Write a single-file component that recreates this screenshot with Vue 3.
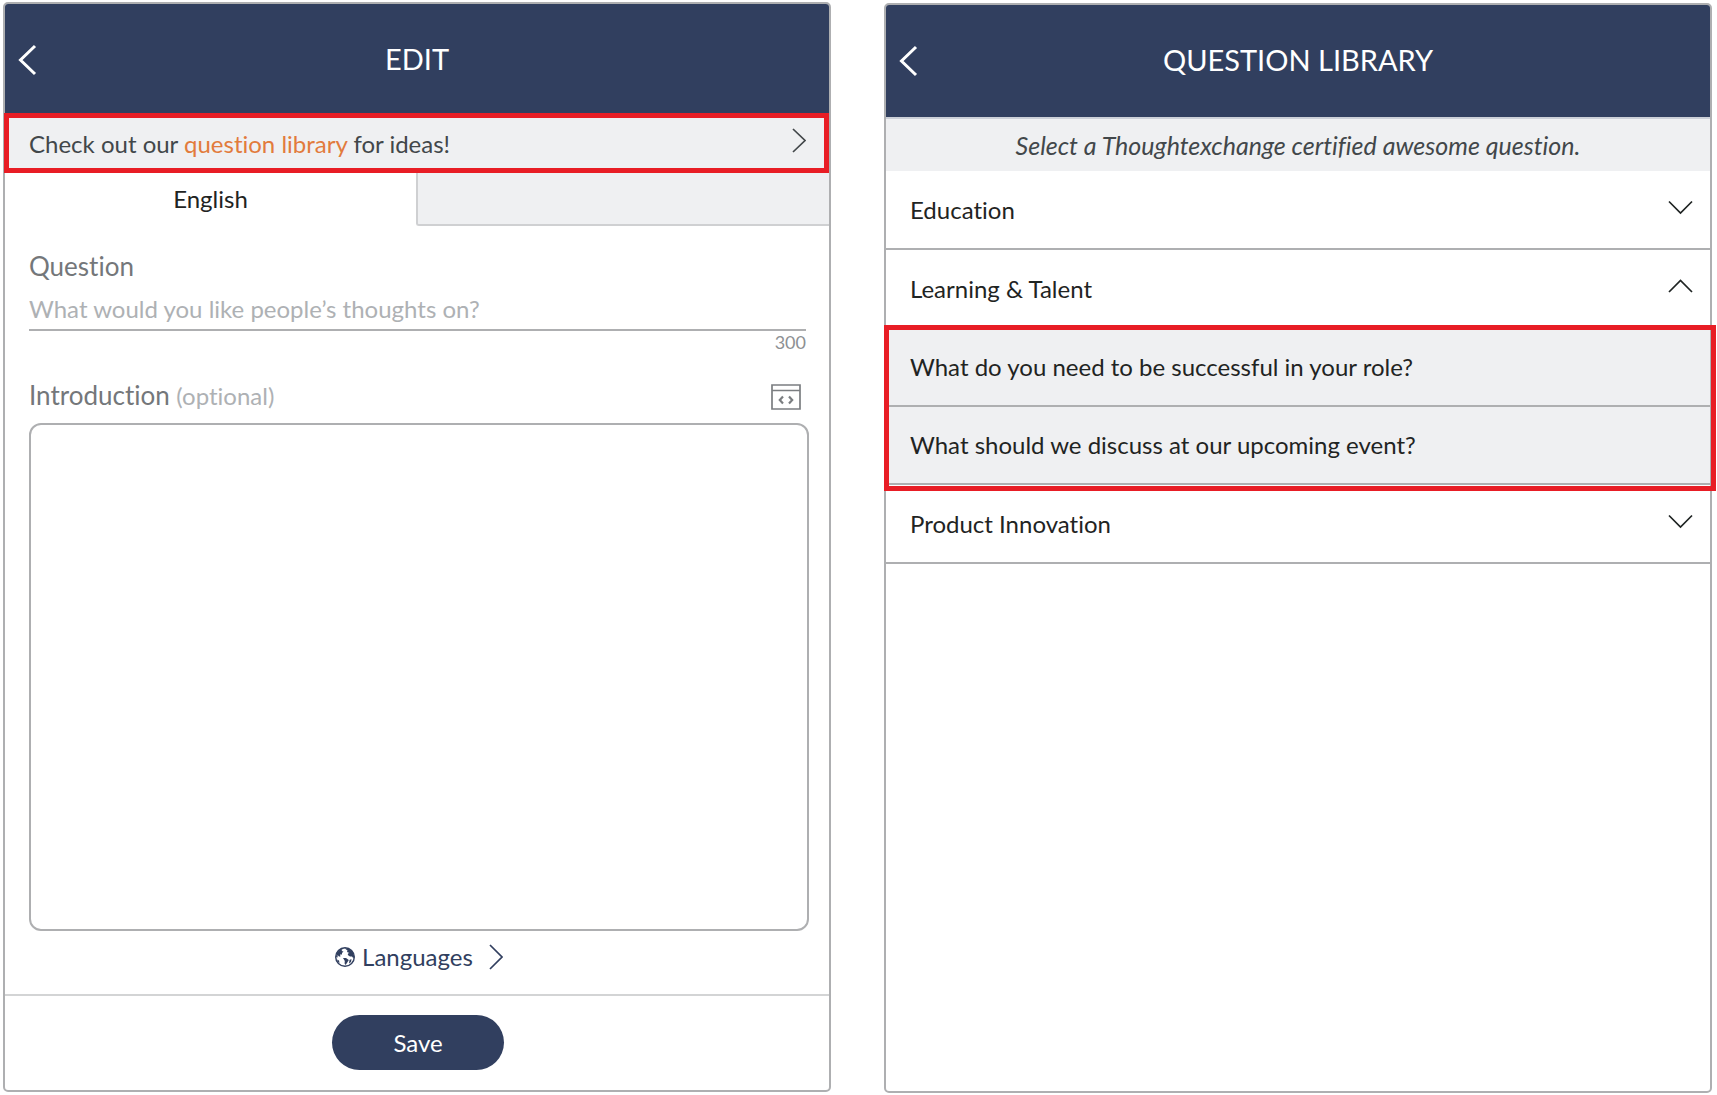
<script setup>
import { ref } from 'vue'

const question = ref('')
const introduction = ref('')
const openCategory = ref('Learning & Talent')

const categories = [
  { name: 'Education', questions: [] },
  {
    name: 'Learning & Talent',
    questions: [
      'What do you need to be successful in your role?',
      'What should we discuss at our upcoming event?',
    ],
  },
  { name: 'Product Innovation', questions: [] },
]

function toggle(name) {
  openCategory.value = openCategory.value === name ? '' : name
}
</script>

<template>
  <main class="screens">
    <section class="panel">
      <header class="bar">
        <button class="back" type="button" aria-label="Back">
          <svg width="20" height="32" viewBox="0 0 20 32" aria-hidden="true">
            <path d="M17 2 2.500 16 17 30" />
          </svg>
        </button>
        <h1>EDIT</h1>
      </header>

      <div class="strip tip highlight">
        <p>Check out our <a href="#library">question library</a> for ideas!</p>
        <svg class="chevron" width="14" height="32" viewBox="0 0 14 32" aria-hidden="true">
          <path d="M1 1 13 12.500 1 24" />
        </svg>
      </div>

      <div class="tabs">
        <button class="tab active" type="button">English</button>
        <div class="tab"></div>
      </div>

      <form class="form" @submit.prevent>
        <label class="label" for="question">Question</label>
        <input
          id="question"
          v-model="question"
          class="question"
          type="text"
          maxlength="300"
          placeholder="What would you like people’s thoughts on?"
        />
        <span class="count">{{ 300 - question.length }}</span>

        <div class="intro-head">
          <label class="label" for="introduction">Introduction <small>(optional)</small></label>
          <button class="code" type="button" aria-label="Embed code">
            <svg width="30" height="26" viewBox="0 0 30 26" aria-hidden="true">
              <path d="M1 1H29V25H1ZM1 6.500H29" stroke-width="1.700" />
              <path d="M12 12.500 8.800 16 12 19.500M18 12.500 21.200 16 18 19.500" stroke-width="2.200" />
            </svg>
          </button>
        </div>
        <textarea id="introduction" v-model="introduction" class="intro"></textarea>

        <button class="languages" type="button">
          <svg class="globe" width="20" height="20" viewBox="0 0 20 20" aria-hidden="true">
            <circle cx="10" cy="10" r="9.300" />
            <path d="M2 5.500 5.500 2 7.500 2.500 6.500 4 8.500 4.500 7 6 7 7.500 5 7.500 5.500 9.500 4 9.500 2.600 8 2.600 10.500 1 10Z" />
            <path d="M9.500 1.200 14 2 17.500 4.500 19.200 9 18.500 11.500 17 9.500 15 9.500 12.800 8 13 6.500 14.500 6 12 5 12.500 3.500Z" />
            <path d="M8 11 11 11 13.800 13 12.600 15 10.600 18 9.600 16.500 9.800 14Z" />
            <path d="M14.500 13 16.500 12 16 15 14 16.500Z" />
            <path d="M2 12.500 4 13.500 4.500 16 3 15Z" />
          </svg>
          <span>Languages</span>
          <svg class="chevron" width="14" height="28" viewBox="0 0 14 28" aria-hidden="true">
            <path d="M1 2 13 14 1 26" />
          </svg>
        </button>
      </form>

      <footer class="actions">
        <button class="save" type="button">Save</button>
      </footer>
    </section>

    <section id="library" class="panel library">
      <header class="bar">
        <button class="back" type="button" aria-label="Back">
          <svg width="20" height="32" viewBox="0 0 20 32" aria-hidden="true">
            <path d="M17 2 2.500 16 17 30" />
          </svg>
        </button>
        <h1>QUESTION LIBRARY</h1>
      </header>

      <p class="strip note">Select a Thoughtexchange certified awesome question.</p>

      <template v-for="category in categories" :key="category.name">
        <button
          class="row"
          type="button"
          :aria-expanded="openCategory === category.name"
          @click="toggle(category.name)"
        >
          <span>{{ category.name }}</span>
          <svg class="chevron" width="25" height="20" viewBox="0 0 25 20" aria-hidden="true">
            <path v-if="openCategory === category.name" d="M1 13 12.500 1.500 24 13" />
            <path v-else d="M1 1.500 12.500 13 24 1.500" />
          </svg>
        </button>
        <div
          v-if="openCategory === category.name && category.questions.length"
          class="questions highlight"
        >
          <button v-for="item in category.questions" :key="item" class="row item" type="button">
            {{ item }}
          </button>
        </div>
      </template>
    </section>
  </main>
</template>

<style>
body {
  margin: 0;
  background: #fff;
}
</style>

<style scoped>
.screens {
  box-sizing: border-box;
  display: grid;
  grid-template-columns: 1fr 1fr;
  gap: 53px;
  min-height: 100vh;
  padding: 2px 5px 2px 3px;
  font-family: Lato, "Liberation Sans", sans-serif;
  font-size: 24px;
  font-variant-ligatures: none;
  line-height: 32px;
  color: #1f2423;
}

.screens *,
.screens *::after {
  box-sizing: border-box;
}

button,
input,
textarea {
  margin: 0;
  padding: 0;
  border: 0;
  background: none;
  font: inherit;
  font-variant-ligatures: none;
  color: inherit;
}

button {
  cursor: pointer;
}

svg {
  display: block;
  flex: none;
  fill: none;
  stroke: currentColor;
}

.panel {
  display: flex;
  flex-direction: column;
  margin-bottom: 1px;
  border: 2px solid #aeafb1;
  border-radius: 5px;
}

.library {
  margin-top: 1px;
  margin-bottom: 0;
}

.bar {
  display: grid;
  grid-template-columns: 48px 1fr 48px;
  align-items: center;
  height: 112px;
  border-radius: 3px 3px 0 0;
  background: #313f5f;
  color: #fff;
}

.bar h1 {
  margin: 0;
  padding-bottom: 2px;
  font-size: 29px;
  font-weight: 400;
  line-height: 36px;
  text-align: center;
}

.back {
  padding-left: 13px;
}

.back svg {
  stroke-width: 3;
}

.strip {
  height: 54px;
  margin: 0;
  border-top: 2px solid #ccd0d8;
  background: #eff0f2;
  color: #42474a;
}

.tip {
  display: flex;
  align-items: center;
  justify-content: space-between;
  padding: 0 23px 0 24px;
}

.tip p {
  margin: 0;
}

.tip a {
  color: #e27b3c;
  text-decoration: none;
}

.note {
  display: grid;
  place-items: center;
  font-size: 25px;
  font-style: italic;
}

.highlight {
  position: relative;
}

.highlight::after {
  content: "";
  position: absolute;
  inset: -5px 0 -3px -1px;
  border: 5px solid #e81d25;
  pointer-events: none;
}

.chevron {
  stroke-width: 1.700;
}

.tabs {
  display: grid;
  grid-template-columns: 411px 1fr;
  grid-template-columns: calc(50% - 1px) 1fr;
  height: 56px;
}

.tab {
  border-bottom: 2px solid #cfd0d2;
  border-left: 2px solid #cfd0d2;
  border-bottom-left-radius: 3px;
  background: #eff0f2;
}

.tab.active {
  padding-top: 2px;
  border: 0;
  background: none;
}

.form {
  display: flex;
  flex: 1;
  flex-direction: column;
  padding: 24px 20px 21px 24px;
}

.label {
  font-size: 26px;
  color: #74777a;
}

.label small {
  font-size: 24px;
  color: #aeb1b4;
}

.question {
  height: 43px;
  margin: 6px 3px 0 0;
  border-bottom: 2px solid #aeafb1;
  border-radius: 0;
  outline: none;
}

.question::placeholder {
  color: #aeb1b4;
  opacity: 1;
}

.count {
  align-self: flex-end;
  margin-right: 3px;
  font-size: 18px;
  line-height: 22px;
  color: #8d9093;
}

.intro-head {
  display: flex;
  align-items: flex-end;
  justify-content: space-between;
  margin-top: 26px;
  padding-right: 8px;
}

.code {
  padding-bottom: 2px;
  color: #7b7e81;
}

.intro {
  flex: 1;
  min-height: 200px;
  margin-top: 11px;
  padding: 12px;
  border: 2px solid #aeafb1;
  border-radius: 12px;
  outline: none;
  resize: none;
}

.languages {
  display: flex;
  align-items: center;
  align-self: center;
  margin-top: 10px;
  color: #313f5f;
}

.languages span {
  margin: 0 16px 0 7px;
}

.globe circle {
  stroke-width: 1.400;
}

.globe path {
  fill: currentColor;
  stroke: none;
}

.actions {
  display: flex;
  justify-content: center;
  padding: 19px 0 20px 2px;
  border-top: 2px solid #d3d4d5;
}

.save {
  width: 172px;
  height: 55px;
  border-radius: 28px;
  background: #313f5f;
  color: #fff;
}

.row {
  display: flex;
  align-items: center;
  justify-content: space-between;
  width: 100%;
  height: 79px;
  padding: 0 17px 0 24px;
  border-bottom: 2px solid #aeafb1;
  text-align: left;
}

.item {
  height: 78px;
  background: #eff0f2;
}

.questions::after {
  inset: -4px -6px -6px -2px;
}
</style>
